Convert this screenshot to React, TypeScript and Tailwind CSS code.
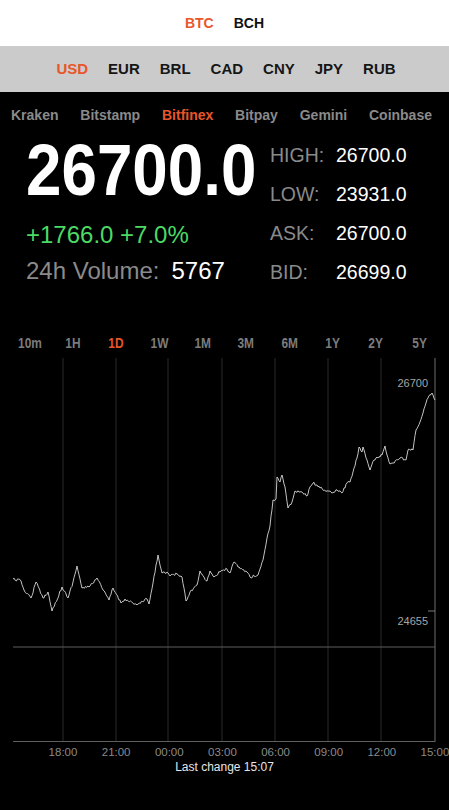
import React from 'react';

const coins = ['BTC', 'BCH'];
const currencies = ['USD', 'EUR', 'BRL', 'CAD', 'CNY', 'JPY', 'RUB'];
const exchanges = ['Kraken', 'Bitstamp', 'Bitfinex', 'Bitpay', 'Gemini', 'Coinbase'];
const ranges = ['10m', '1H', '1D', '1W', '1M', '3M', '6M', '1Y', '2Y', '5Y'];
const times = ['18:00', '21:00', '00:00', '03:00', '06:00', '09:00', '12:00', '15:00'];

const stats = [
  { label: 'HIGH:', value: '26700.0' },
  { label: 'LOW:', value: '23931.0' },
  { label: 'ASK:', value: '26700.0' },
  { label: 'BID:', value: '26699.0' },
];

// rough trace of the 1D price line, page coordinates
const keyPts: [number, number][] = [
  [13, 579], [21, 581], [24, 590], [31, 598], [36, 582], [43, 598], [48, 592], [52, 611],
  [62, 587], [68, 598], [73, 582], [77, 566], [82, 588], [89, 587], [97, 578], [103, 590],
  [109, 600], [113, 588], [121, 603], [125, 599], [137, 605], [147, 599], [149, 604],
  [153, 583], [158, 555], [162, 573], [167, 572], [170, 576], [177, 574], [182, 577],
  [186, 601], [190, 592], [197, 585], [200, 571], [204, 577], [207, 581], [210, 571],
  [214, 577], [220, 572], [227, 569], [230, 573], [234, 562], [238, 567], [247, 572],
  [250, 577], [258, 575], [263, 560], [267, 538], [270, 526], [273, 500], [276, 499],
  [277, 477], [280, 482], [282, 475], [285, 487], [288, 508], [292, 502], [295, 491],
  [300, 492], [303, 493], [307, 496], [310, 487], [313, 483], [317, 485], [320, 488],
  [327, 491], [332, 493], [337, 490], [342, 493], [347, 483], [350, 482], [353, 472],
  [357, 458], [359, 447], [362, 452], [363, 447], [367, 460], [370, 470], [374, 460],
  [378, 458], [382, 455], [385, 446], [387, 455], [390, 464], [393, 463], [400, 458],
  [406, 460], [408, 450], [413, 450], [416, 430], [420, 422], [423, 413], [426, 403],
  [428, 398], [432, 393], [433, 395], [435, 400],
];

function buildPath() {
  let seed = 12345;
  const rand = () => {
    seed = (seed * 16807) % 2147483647;
    return seed / 2147483647;
  };
  const out: string[] = [`M${keyPts[0][0]} ${keyPts[0][1]}`];
  for (let i = 1; i < keyPts.length; i++) {
    const [x0, y0] = keyPts[i - 1];
    const [x1, y1] = keyPts[i];
    const steps = Math.max(1, Math.round((x1 - x0) / 1.1));
    for (let s = 1; s <= steps; s++) {
      const t = s / steps;
      const jitter = s === steps ? 0 : (rand() - 0.5) * 2.6;
      out.push(`L${(x0 + (x1 - x0) * t).toFixed(1)} ${(y0 + (y1 - y0) * t + jitter).toFixed(1)}`);
    }
  }
  return out.join(' ');
}

const linePath = buildPath();
const gridX = [63, 116, 168, 222, 275, 328, 381];

export default function App() {
  return (
    <div className="w-full h-[810px] bg-black overflow-hidden font-['Liberation_Sans',Arial,sans-serif]">
      {/* coin switch */}
      <div className="h-[46px] bg-white flex items-center justify-center gap-5">
        {coins.map((c, i) => (
          <span key={c} className={`text-[14px] font-bold ${i === 0 ? 'text-[#e8562a]' : 'text-[#111]'}`}>
            {c}
          </span>
        ))}
      </div>

      {/* currency bar */}
      <div className="h-[46px] bg-[#cbcbcb] flex items-center justify-center gap-5 pl-[3px]">
        {currencies.map((c, i) => (
          <span key={c} className={`text-[15px] font-bold ${i === 0 ? 'text-[#e8562a]' : 'text-[#161616]'}`}>
            {c}
          </span>
        ))}
      </div>

      {/* exchanges */}
      <div className="pt-[14px] pl-[11px] pr-[17px] flex justify-between">
        {exchanges.map((e) => (
          <span
            key={e}
            className={`text-[14px] leading-[18px] font-bold ${e === 'Bitfinex' ? 'text-[#e8562a]' : 'text-[#8a8a8a]'}`}
          >
            {e}
          </span>
        ))}
      </div>

      {/* price block */}
      <div className="mt-[9.5px] flex">
        <div className="pl-[26px] w-[270px]">
          <div className="h-[72px] text-[72px] leading-[72px] font-bold text-white scale-x-[0.885] origin-left whitespace-nowrap">
            26700.0
          </div>
          <div className="mt-[17px] text-[24px] leading-[24px] text-[#4cd964] whitespace-nowrap">
            +1766.0 +7.0%
          </div>
          <div className="mt-[12px] text-[24px] leading-[24px] whitespace-nowrap">
            <span className="text-[#8a8a8a]">24h Volume:</span>
            <span className="text-white ml-[12px]">5767</span>
          </div>
        </div>
        <div className="pt-[2px]">
          {stats.map((s) => (
            <div key={s.label} className="flex h-[39.3px] items-center text-[19.5px] leading-[39.3px]">
              <span className="w-[66px] text-[#8a8a8a]">{s.label}</span>
              <span className="text-white">{s.value}</span>
            </div>
          ))}
        </div>
      </div>

      {/* ranges */}
      <div className="mt-[41px] px-[8px] grid grid-cols-10">
        {ranges.map((r) => (
          <div key={r} className="flex justify-center">
            <span
              className={`inline-block text-[14px] leading-[18px] font-bold scale-x-[0.85] ${r === '1D' ? 'text-[#e8562a]' : 'text-[#7c7c7c]'}`}
            >
              {r}
            </span>
          </div>
        ))}
      </div>

      {/* chart */}
      <svg width="449" height="408" viewBox="0 352 449 408" className="block">
        {gridX.map((x) => (
          <line key={x} x1={x} y1={358} x2={x} y2={741} stroke="#2a2a2a" strokeWidth="1" />
        ))}
        <line x1={435} y1={358} x2={435} y2={742} stroke="#5c5c5c" strokeWidth="1.2" />
        <line x1={13} y1={647} x2={435} y2={647} stroke="#5e5e5e" strokeWidth="1" />
        <line x1={13} y1={741.5} x2={435} y2={741.5} stroke="#5e5e5e" strokeWidth="1" />
        <line x1={428} y1={611} x2={435} y2={611} stroke="#7a7a7a" strokeWidth="1" />
        <path d={linePath} fill="none" stroke="#d8d8d8" strokeWidth="0.9" strokeLinejoin="round" />
        <text x={428} y={387} textAnchor="end" fontSize="11" fill="#a6a6a6" fontFamily="Liberation Sans, Arial, sans-serif">
          26700
        </text>
        <text x={428} y={625} textAnchor="end" fontSize="11" fill="#a6a6a6" fontFamily="Liberation Sans, Arial, sans-serif">
          24655
        </text>
        {times.map((t, i) => (
          <text
            key={t}
            x={63 + i * 53.14}
            y={756}
            textAnchor="middle"
            fontSize="11.5"
            fill="#8a8a8a"
            fontFamily="Liberation Sans, Arial, sans-serif"
          >
            {t}
          </text>
        ))}
      </svg>

      <div className="text-center text-[12px] leading-[14px] text-[#e6e6e6]">
        Last change 15:07
      </div>
    </div>
  );
}
